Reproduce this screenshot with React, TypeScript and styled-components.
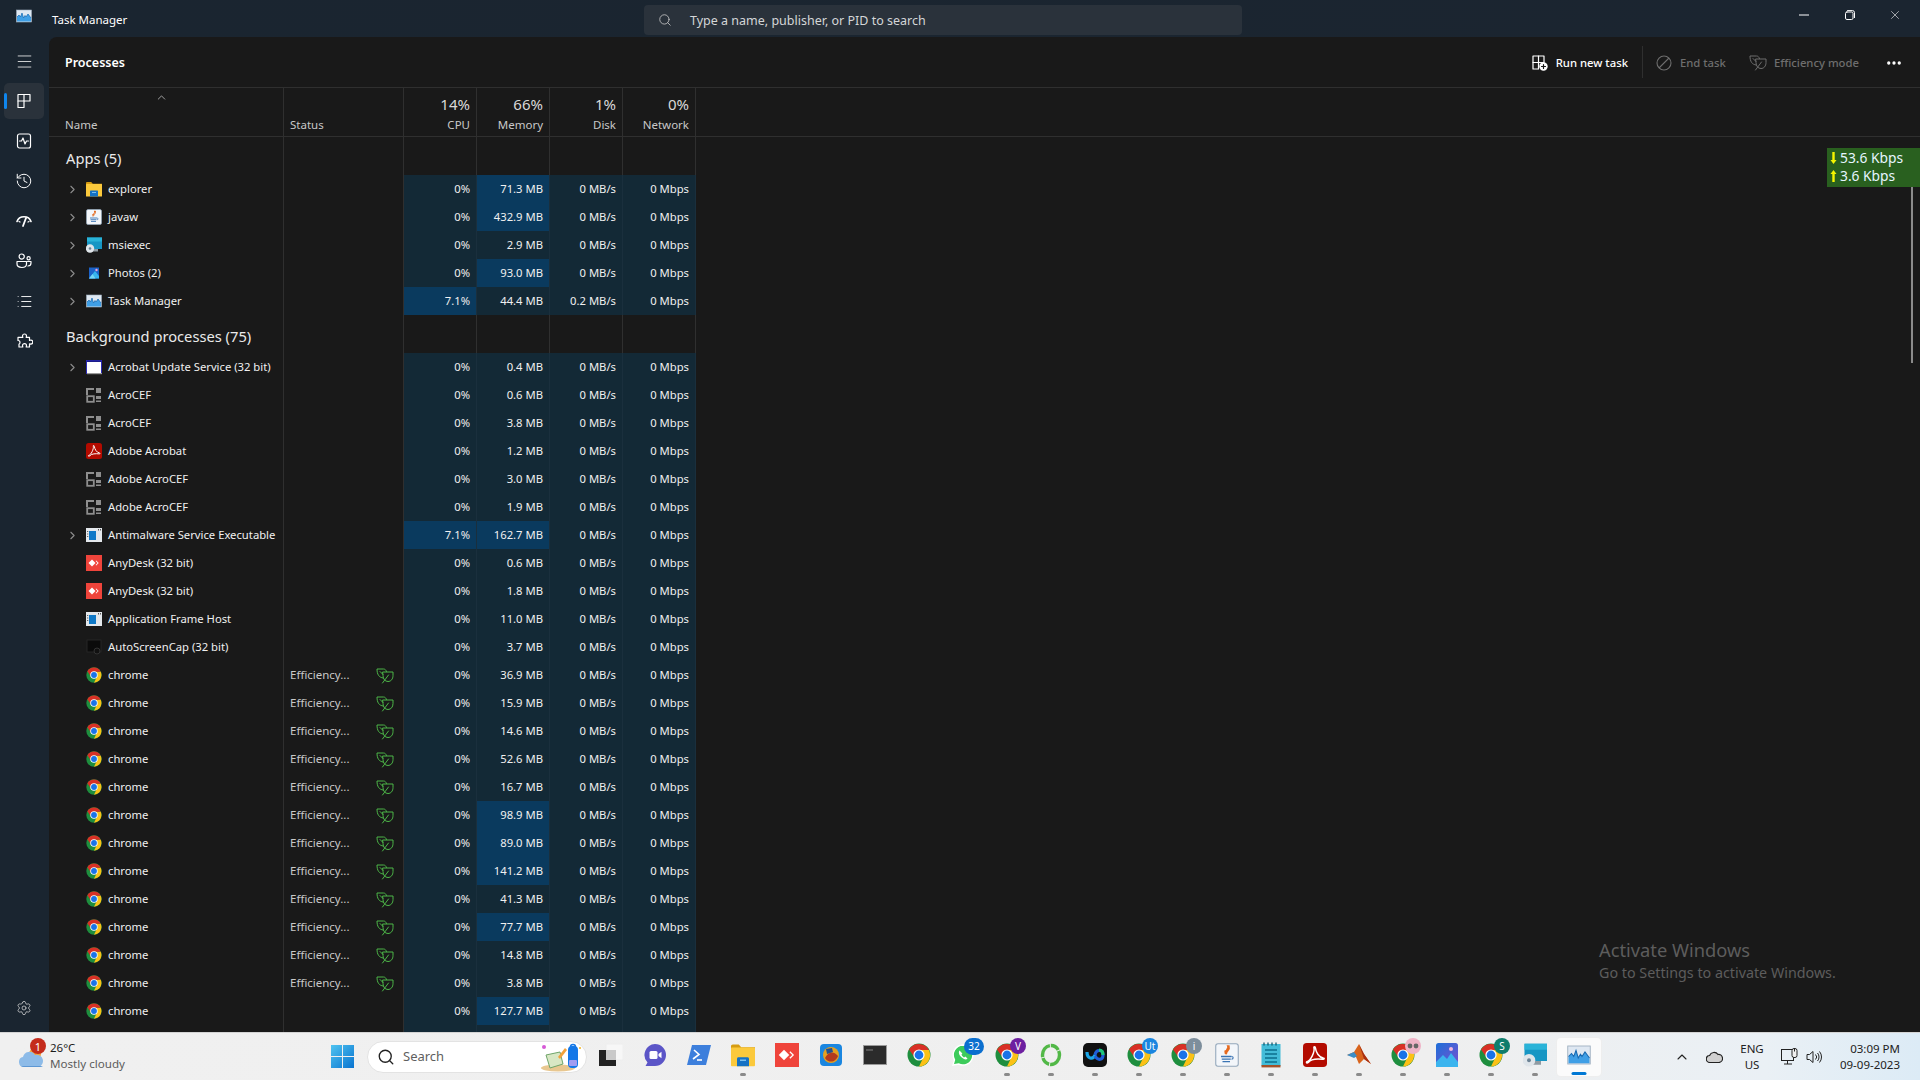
import React from "react";
import styled, { createGlobalStyle } from "styled-components";
import { ChevronRight, ChevronUp, History, List, Menu, MoreHorizontal, Search, Settings, X } from "lucide-react";

const GlobalStyle = createGlobalStyle`
  html, body {
    margin: 0;
    padding: 0;
    width: 1920px;
    height: 1080px;
    overflow: hidden;
    background: #1b2530;
    font-family: "Noto Sans", "Open Sans", sans-serif;
  }
  * { box-sizing: border-box; }
`;

const Screen = styled.div`
  position: relative;
  width: 1920px;
  height: 1080px;
  display: flex;
  flex-direction: column;
  overflow: hidden;
`;

const Window = styled.div`
  flex: 1;
  min-height: 0;
  display: flex;
  flex-direction: column;
  background: linear-gradient(90deg, #1a2530 0%, #1b2530 100%);
  color: #fff;
`;

const TitleBar = styled.div`
  height: 37px;
  flex: none;
  display: grid;
  grid-template-columns: 644px 598px 1fr;
  align-items: center;
`;

const TitleLeft = styled.div`
  display: flex;
  align-items: center;
  padding: 2px 0 0 16px;
  gap: 20px;
  font-size: 11.5px;
  svg { margin-top: -8px; }
`;

const TitleSearch = styled.div`
  height: 30px;
  margin-top: 3px;
  background: #2a323b;
  border-radius: 4px;
  display: flex;
  align-items: center;
  padding-left: 14px;
  gap: 18px;
  font-size: 12.5px;
  color: #d4d6d8;
`;

const WindowButtons = styled.div`
  display: flex;
  justify-content: flex-end;
  padding-right: 2px;
  margin-top: -8px;
`;

const WindowButton = styled.div`
  width: 45.5px;
  height: 28px;
  display: flex;
  align-items: center;
  justify-content: center;
`;

const Body = styled.div`
  flex: 1;
  min-height: 0;
  display: flex;
`;

const Sidebar = styled.nav`
  width: 49px;
  flex: none;
  display: flex;
  flex-direction: column;
  align-items: flex-start;
  padding: 6px 0 3px 4px;
`;

const NavItem = styled.div<{ $active?: boolean }>`
  position: relative;
  width: 40px;
  height: 36px;
  margin-bottom: 4px;
  border-radius: 5px;
  display: flex;
  align-items: center;
  justify-content: center;
  background: ${(p) => (p.$active ? "#2a323b" : "transparent")};
  &::before {
    content: "";
    display: ${(p) => (p.$active ? "block" : "none")};
    position: absolute;
    left: 0;
    top: 10px;
    width: 3px;
    height: 16px;
    border-radius: 2px;
    background: #0f86ee;
  }
`;

const NavSpacer = styled.div`
  flex: 1;
`;

const NavBottom = styled(NavItem)`
  margin-bottom: 3px;
`;

const Panel = styled.main`
  flex: 1;
  min-width: 0;
  background: #191919;
  border-top-left-radius: 8px;
  display: flex;
  flex-direction: column;
  overflow: hidden;
`;

const CommandBar = styled.div`
  height: 51px;
  flex: none;
  display: flex;
  align-items: center;
  padding: 1px 17px 0 16px;
  border-bottom: 1px solid #2f2f2f;
`;

const Heading = styled.h1`
  margin: 0 auto 0 0;
  font-size: 12.5px;
  font-weight: 600;
`;

const Command = styled.div<{ $off?: boolean; $gap?: number; $left?: number }>`
  display: flex;
  align-items: center;
  gap: ${(p) => p.$gap ?? 8}px;
  margin-left: ${(p) => p.$left ?? 0}px;
  font-size: 11.3px;
  font-weight: 500;
  color: ${(p) => (p.$off ? "#6e6e6e" : "#fff")};
`;

const CommandDivider = styled.div`
  width: 1px;
  height: 32px;
  margin: -1px 13px 0 14px;
  background: #2f2f2f;
`;

const HeaderRow = styled.div`
  height: 49px;
  flex: none;
  display: grid;
  grid-template-columns: 235px 120px 73px 73px 73px 73px;
  border-bottom: 1px solid #2f2f2f;
`;

const HeaderCell = styled.div`
  position: relative;
  border-right: 1px solid #2f2f2f;
  display: flex;
  flex-direction: column;
  justify-content: flex-end;
  font-size: 11.5px;
  color: #c8c8c8;
  padding: 0 0 4px 16px;
`;

const StatusHeader = styled(HeaderCell)`
  padding-left: 6px;
`;

const SortMark = styled.div`
  position: absolute;
  left: 106px;
  top: 3px;
  color: #bdbdbd;
  line-height: 0;
`;

const MetricHeader = styled(HeaderCell)`
  align-items: flex-end;
  padding: 0 6px 4px 0;
`;

const Percent = styled.div`
  font-size: 15px;
  line-height: 20px;
  color: #d8d8d8;
  margin-bottom: 3px;
`;

const Rows = styled.div`
  flex: 1;
  min-height: 0;
  overflow: hidden;
`;

const Line = styled.div<{ $h: number }>`
  height: ${(p) => p.$h}px;
  display: grid;
  grid-template-columns: 235px 120px 73px 73px 73px 73px;
`;

const Cell = styled.div`
  border-right: 1px solid #2f2f2f;
  min-width: 0;
`;

const GroupName = styled(Cell)`
  font-size: 14.7px;
  color: #eaeaea;
  padding: 3px 0 0 17px;
  display: flex;
  align-items: center;
  white-space: nowrap;
`;

const NameCell = styled(Cell)`
  display: flex;
  align-items: center;
  font-size: 11.25px;
  color: #f0f0f0;
  white-space: nowrap;
`;

const NameText = styled.span`
  margin-top: -2px;
`;

const Expander = styled.div`
  width: 37px;
  padding-left: 17px;
  color: #8c8c8c;
  display: flex;
  flex: none;
`;

const RowIcon = styled.div`
  width: 16px;
  height: 16px;
  flex: none;
  margin-right: 6px;
  display: flex;
`;

const StatusCell = styled(Cell)`
  display: flex;
  align-items: center;
  justify-content: space-between;
  padding: 0 9px 0 6px;
  font-size: 11.5px;
  color: #c8c8c8;
  span { margin-top: -2px; }
`;

const HeatCell = styled.div<{ $hot?: boolean }>`
  background: ${(p) => (p.$hot ? "#0a3a5e" : "#132936")};
  border-right: 1px solid #1a2f3d;
  display: flex;
  align-items: center;
  justify-content: flex-end;
  padding: 0 6px 2px 0;
  font-size: 11.25px;
  color: #f0f0f0;
  white-space: nowrap;
`;

const NetMeter = styled.div`
  position: absolute;
  left: 1827px;
  top: 148px;
  width: 93px;
  height: 39px;
  background: #29601f;
  color: #e6f6ff;
  font-size: 13.8px;
  line-height: 18px;
  padding: 1px 0 0 3px;
`;

const NetLine = styled.div`
  display: flex;
  align-items: center;
  gap: 3px;
  white-space: nowrap;
`;

const ArrowSvg = styled.svg<{ $up?: boolean }>`
  transform: ${(p) => (p.$up ? "none" : "rotate(180deg)")};
`;

const ScrollThumb = styled.div`
  position: absolute;
  left: 1911px;
  top: 187px;
  width: 2px;
  height: 176px;
  background: #8b8b8b;
`;

const Watermark = styled.div`
  position: absolute;
  left: 1599px;
  top: 936px;
  color: #5d5d5d;
  font-size: 18.3px;
  line-height: 28px;
  small {
    display: block;
    font-size: 14.3px;
    line-height: 18px;
  }
`;

const Taskbar = styled.footer`
  height: 48px;
  flex: none;
  display: flex;
  align-items: center;
  background: linear-gradient(90deg, #f0f0f0 0%, #efefef 75%, #eaf0f5 92%, #dcebf6 100%);
  border-top: 1px solid #d4d4d4;
  color: #1b1b1b;
`;

const Weather = styled.div`
  position: relative;
  width: 320px;
  flex: none;
  height: 100%;
  display: flex;
  align-items: center;
  padding-left: 18px;
  gap: 6px;
`;

const WeatherBadge = styled.div`
  position: absolute;
  left: 30px;
  top: 5px;
  width: 16px;
  height: 16px;
  border-radius: 50%;
  background: #c42b1c;
  color: #fff;
  font-size: 11px;
  display: flex;
  align-items: center;
  justify-content: center;
`;

const WeatherText = styled.div`
  font-size: 11.5px;
  line-height: 16px;
  margin-top: -2px;
  small {
    display: block;
    font-size: 11.6px;
    color: #5c5c5c;
  }
`;

const StartButton = styled.div`
  width: 47px;
  flex: none;
  display: flex;
  justify-content: center;
  padding-right: 2px;
`;

const SearchPill = styled.div`
  width: 220px;
  height: 32px;
  margin-right: 2px;
  flex: none;
  border-radius: 16px;
  background: #fff;
  border: 1px solid #e3e3e3;
  display: flex;
  align-items: center;
  padding-left: 9px;
  gap: 8px;
  font-size: 13px;
  color: #5f5f5f;
  span { margin-top: -2px; }
  svg:last-child { margin-left: auto; margin-right: 4px; }
`;

const AppItem = styled.div<{ $active?: boolean }>`
  position: relative;
  width: 44px;
  height: 38px;
  flex: none;
  display: flex;
  align-items: center;
  justify-content: center;
  ${(p) => p.$active && "background: #fbfbfb; border-radius: 4px; box-shadow: 0 0 0 1px #eeeeee;"}
  padding-bottom: 3px;
`;

const RunDot = styled.div<{ $active?: boolean }>`
  position: absolute;
  left: 50%;
  bottom: ${(p) => (p.$active ? "1px" : "0")};
  transform: translateX(-50%);
  width: ${(p) => (p.$active ? "15px" : "6px")};
  height: 3px;
  border-radius: 2px;
  background: ${(p) => (p.$active ? "#0078d4" : "#8a8a8a")};
`;

const AppBadge = styled.div<{ $bg: string; $wide?: boolean }>`
  position: absolute;
  right: ${(p) => (p.$wide ? "1px" : "3px")};
  top: 0;
  min-width: ${(p) => (p.$wide ? "20px" : "16px")};
  height: ${(p) => (p.$wide ? "17px" : "16px")};
  padding: 0 2px;
  border-radius: 9px;
  background: ${(p) => p.$bg};
  color: #fff;
  font-size: 10px;
  display: flex;
  align-items: center;
  justify-content: center;
`;

const PinkGlasses = styled.div`
  position: absolute;
  right: 4px;
  top: 0;
  width: 16px;
  height: 16px;
  border-radius: 50%;
  background: #efb3c6;
  display: flex;
  align-items: center;
  justify-content: center;
`;

const Tray = styled.div`
  margin-left: auto;
  display: flex;
  align-items: center;
  padding-right: 20px;
`;

const TrayBox = styled.div<{ $w: number }>`
  width: ${(p) => p.$w}px;
  display: flex;
  align-items: center;
  justify-content: center;
`;

const Lang = styled(TrayBox)`
  flex-direction: column;
  font-size: 11.5px;
  line-height: 16px;
  color: #222;
`;

const Clock = styled.div`
  width: 76px;
  text-align: right;
  font-size: 11.5px;
  line-height: 16px;
  color: #222;
`;

const stroke = { fill: "none", stroke: "#fff", strokeWidth: 1.2, strokeLinecap: "round" as const, strokeLinejoin: "round" as const };

const TaskManagerIcon = ({ size = 16 }: { size?: number }) => (
  <svg width={size} height={size} viewBox="0 0 16 16">
    <rect x="0.5" y="2" width="15" height="12" fill="#dfe8f2" stroke="#9fb0c0" strokeWidth="0.6" />
    <path d="M1 12V9l2-2 1.5 2L6 5l1.5 5L9 7.5 10 9l2-3 3 4v3.5H1z" fill="#3f9fe6" />
    <path d="M1 9l2-2 1.5 2L6 5l1.5 5L9 7.5 10 9l2-3 3 4" fill="none" stroke="#1668b0" strokeWidth="0.7" />
  </svg>
);

const FolderIcon = ({ size = 16 }: { size?: number }) => (
  <svg width={size} height={size} viewBox="0 0 16 16">
    <path d="M0 2.2C0 1.5.5 1 1.2 1h4l1.6 1.8H16V4H0z" fill="#d69c12" />
    <rect x="0" y="3" width="16" height="12.5" rx="0.6" fill="#fbc93c" />
    <path d="M4 10.5c0-.6.4-1 1-1h6c.6 0 1 .4 1 1v5H4z" fill="#1572c4" />
    <rect x="6" y="11" width="4" height="1" fill="#7cc0ee" />
  </svg>
);

const JavaIcon = ({ size = 16 }: { size?: number }) => (
  <svg width={size} height={size} viewBox="0 0 16 16">
    <rect x="0.5" y="0.5" width="15" height="15" rx="1.5" fill="#f3f6fa" stroke="#93a7bb" strokeWidth="0.7" />
    <path d="M8.5 2c1 2-2 2.5-.8 4.5.3-1.5 2.5-2 1.6-4.5zM7 5c-.8 1 .2 1.6 0 2.5" fill="none" stroke="#e5691e" strokeWidth="1" />
    <path d="M4 9h7M4.5 10.7h6M5 12.4h5" stroke="#3a74b4" strokeWidth="0.9" />
    <path d="M11 9c1.5 0 1.5 1.8 0 1.8" fill="none" stroke="#3a74b4" strokeWidth="0.7" />
  </svg>
);

const MsiIcon = ({ size = 16 }: { size?: number }) => (
  <svg width={size} height={size} viewBox="0 0 16 16">
    <rect x="1" y="0.5" width="15" height="11.5" fill="#1796c4" />
    <rect x="1" y="0.5" width="15" height="4" fill="#29b3d8" />
    <rect x="5" y="12" width="7" height="2.5" fill="#8f9aa2" />
    <circle cx="4" cy="11.5" r="4.2" fill="#dfe5ea" />
    <circle cx="4" cy="11.5" r="1.3" fill="#6d8496" />
  </svg>
);

const PhotosIcon = ({ size = 16 }: { size?: number }) => (
  <svg width={size} height={size} viewBox="0 0 16 16">
    <rect x="3" y="2.5" width="10" height="11" fill="#1c62c8" />
    <path d="M3 13.5l6-7.5 4 5v2.5z" fill="#37b4ee" />
    <path d="M3 13.5L6.5 9l3 4.5z" fill="#76d6f5" />
    <circle cx="10.5" cy="5" r="1.2" fill="#f0a6d8" />
  </svg>
);

const PlainWindowIcon = ({ size = 16 }: { size?: number }) => (
  <svg width={size} height={size} viewBox="0 0 16 16">
    <rect x="0.5" y="1.5" width="15" height="13" fill="#fff" stroke="#2b2bb8" />
    <rect x="0.5" y="1.5" width="15" height="1.5" fill="#1c1c8c" />
    <rect x="1" y="14" width="15" height="1.2" fill="#9a9a9a" />
  </svg>
);

const GenericAppIcon = ({ size = 16 }: { size?: number }) => (
  <svg width={size} height={size} viewBox="0 0 16 16">
    <path d="M1 8V2h7" fill="none" stroke="#8e8e8e" strokeWidth="2" />
    <rect x="10" y="1" width="5" height="5" fill="#8e8e8e" />
    <rect x="1.2" y="9.2" width="6.6" height="5.6" fill="none" stroke="#8e8e8e" strokeWidth="1.8" />
    <rect x="10" y="9" width="5" height="3" fill="#8e8e8e" />
    <rect x="10" y="13.5" width="5" height="1.5" fill="#8e8e8e" />
  </svg>
);

const AcrobatIcon = ({ size = 16 }: { size?: number }) => (
  <svg width={size} height={size} viewBox="0 0 16 16">
    <rect width="16" height="16" rx="2.5" fill="#b30b00" />
    <path d="M2.5 12.5C5 12 8 6 7.3 3.2c-.3-1 .9-1 1 .1C8.6 6 10.5 9.5 13.5 10c1 .1.7 1-.3.9C10 10.5 5.5 10.5 3.5 13c-.8.7-1.6 0-1-.5z" fill="none" stroke="#fff" strokeWidth="1" />
  </svg>
);

const AppFrameIcon = ({ size = 16 }: { size?: number }) => (
  <svg width={size} height={size} viewBox="0 0 16 16">
    <rect y="1" width="16" height="14" fill="#e4e8ec" />
    <rect x="3" y="4" width="7" height="9" fill="#0f79c8" />
    <rect x="1.2" y="4" width="1" height="1" fill="#444" />
    <rect x="1.2" y="6.5" width="1" height="1" fill="#444" />
    <rect x="1.2" y="9" width="1" height="1" fill="#444" />
    <rect x="12" y="2" width="1" height="1.5" fill="#555" />
    <rect x="14" y="2" width="1" height="1.5" fill="#555" />
  </svg>
);

const AnyDeskIcon = ({ size = 16 }: { size?: number }) => (
  <svg width={size} height={size} viewBox="0 0 16 16">
    <rect width="16" height="16" fill="#ef443b" />
    <path d="M6 4.5L9.5 8 6 11.5 2.5 8z" fill="#fff" />
    <path d="M10.2 5.5L12.7 8l-2.5 2.5-.6-.6L11.500 8 9.600 6.100z" fill="#fff" />
  </svg>
);

const ScreenCapIcon = ({ size = 16 }: { size?: number }) => (
  <svg width={size} height={size} viewBox="0 0 16 16">
    <rect x="1" y="1" width="14" height="12" fill="#0b0b0b" stroke="#262626" />
    <circle cx="11" cy="12" r="3" fill="#111" stroke="#333" />
  </svg>
);

const ChromeIcon = ({ size = 16 }: { size?: number }) => (
  <svg width={size} height={size} viewBox="0 0 24 24">
    <circle cx="12" cy="12" r="11.5" fill="#1e8e3e" />
    <path d="M12 7h10A11.5 11.5 0 0 1 12 23.5l4.33-9A5 5 0 0 0 12 7z" fill="#fbc116" />
    <path d="M2 6.5A11.5 11.5 0 0 1 22 7H12a5 5 0 0 0-4.33 7.5z" fill="#d93025" />
    <circle cx="12" cy="12" r="5.6" fill="#fff" />
    <circle cx="12" cy="12" r="4.4" fill="#1a73e8" />
  </svg>
);

const LeafIcon = ({ color = "#4db748" }: { color?: string }) => (
  <svg width="18" height="17" viewBox="0 0 18 17" fill="none" stroke={color} strokeWidth="1" strokeLinejoin="round" strokeLinecap="round">
    <path d="M7 11C3 10.5 1 7.5 1 2h6.5c1.5 0 2.5 1 3 2.5" />
    <path d="M7 5h10v3.5c0 3.5-2 6-5 6s-5-2.500-5-5.500z" />
    <path d="M4 4.5l3 3M12.5 8l-6 8" />
  </svg>
);

const ProcessesNavIcon = () => (
  <svg width="16" height="16" viewBox="0 0 16 16" {...stroke}>
    <path d="M2 1.5h12V8H8v6.5H2z" />
    <path d="M2 8h6V1.5" />
  </svg>
);

const PerformanceNavIcon = () => (
  <svg width="16" height="16" viewBox="0 0 16 16" {...stroke}>
    <rect x="1.5" y="1" width="13" height="14" rx="2" />
    <path d="M3.5 8h2L7 5l2 6 1.5-3h2" />
  </svg>
);

const StartupNavIcon = () => (
  <svg width="16" height="16" viewBox="0 0 16 16" {...stroke}>
    <path d="M1 8.5C2 5.5 4.8 3.7 8 3.7s6 1.8 7 4.8" strokeWidth="1.6" />
    <path d="M10 5L7 13" strokeWidth="1.8" />
    <path d="M3 8.5l1 .5M13 8.5l-1 .5" />
  </svg>
);

const UsersNavIcon = () => (
  <svg width="16" height="16" viewBox="0 0 16 16" {...stroke}>
    <circle cx="5.7" cy="3.6" r="2.6" />
    <circle cx="12.6" cy="5.2" r="1.6" />
    <path d="M1 8.5h9.5V11c0 2.2-2 3.5-4.7 3.5S1 13.2 1 11z" />
    <path d="M11.5 8.5H15V10c0 2-1.3 3-3 3" />
  </svg>
);

const ServicesNavIcon = () => (
  <svg width="17" height="17" viewBox="0 0 17 17" {...stroke}>
    <path d="M6.5 3a2 2 0 0 1 4 0c0 .6-.3 1-.3 1.4h3.300v3c.4 0 .8-.3 1.300-.3a2 2 0 0 1 0 4c-.5 0-.9-.3-1.300-.3V14h-3.300c0-.4.3-.8.3-1.400a2 2 0 0 0-4 0c0 .6.3 1 .3 1.400H3v-3c.6 0 1-.7 1-1.500S3.400 7.500 2 7.500V4.400h4.800c0-.4-.3-.8-.3-1.400z" />
  </svg>
);

const RunTaskIcon = () => (
  <svg width="16" height="16" viewBox="0 0 16 16" {...stroke}>
    <path d="M1 1h11v6.500H6.500V14H1z" />
    <path d="M1 7.5h5.500V1" />
    <circle cx="11.5" cy="11.5" r="4.2" fill="#fff" stroke="none" />
    <path d="M11.5 9.5v4M9.5 11.5h4" stroke="#191919" />
  </svg>
);

const EndTaskIcon = () => (
  <svg width="16" height="16" viewBox="0 0 16 16" fill="none" stroke="#6e6e6e" strokeWidth="1.1">
    <circle cx="8" cy="8" r="7" />
    <path d="M3 13L13 3" />
  </svg>
);

const WindowRestore = () => (
  <svg width="10" height="10" viewBox="0 0 10 10" {...stroke} strokeWidth="1">
    <rect x="0.5" y="2" width="7.5" height="7.5" rx="1.4" />
    <path d="M2.5.6h5a2 2 0 0 1 2 2v5" />
  </svg>
);

const WeatherCloud = () => (
  <svg width="26" height="22" viewBox="0 0 26 22">
    <circle cx="17" cy="8" r="6" fill="#f3a33a" />
    <path d="M6 21a5 5 0 0 1-1-9.900A6.500 6.500 0 0 1 17 9a5.500 5.500 0 0 1 3.500 12z" fill="#8dbbe8" />
    <path d="M6 21a5 5 0 0 1-3-1h22a5 5 0 0 1-4 1z" fill="#5d97d3" />
  </svg>
);

const WindowsLogo = () => (
  <svg width="23" height="23" viewBox="0 0 23 23">
    <defs>
      <linearGradient id="winGrad" x1="0" y1="0" x2="1" y2="1">
        <stop offset="0" stopColor="#4fc3f0" />
        <stop offset="1" stopColor="#0a74d0" />
      </linearGradient>
    </defs>
    <path d="M0 0h11v11H0zM12 0h11v11H12zM0 12h11v11H0zM12 12h11v11H12z" fill="url(#winGrad)" />
  </svg>
);

const SearchArt = () => (
  <svg width="44" height="30" viewBox="0 0 44 30">
    <ellipse cx="20" cy="26" rx="17" ry="3.5" fill="#e8c790" />
    <path d="M8 13l14-3 3 12-13 4z" fill="#d8e7c4" stroke="#6fa56a" />
    <path d="M20 15l7-9 2 2-7 9z" fill="#f2a23c" />
    <rect x="30" y="4" width="10" height="22" rx="4" fill="#1478e8" />
    <circle cx="35" cy="5" r="2.5" fill="none" stroke="#1478e8" strokeWidth="1.5" />
    <rect x="31" y="18" width="8" height="6" rx="1" fill="#a19cf0" />
    <circle cx="6" cy="5" r="2" fill="#d65ad6" />
    <circle cx="42" cy="6" r="1" fill="#f2b322" />
  </svg>
);

const TaskViewIcon = () => (
  <svg width="24" height="24" viewBox="0 0 24 24">
    <rect x="7" y="1" width="17" height="16" fill="#f7f7f7" stroke="#eeeeee" />
    <rect x="0" y="7" width="17" height="16" fill="#222" />
    <rect x="7" y="7" width="10" height="10" fill="#c9c9c9" />
  </svg>
);

const MeetIcon = () => (
  <svg width="24" height="24" viewBox="0 0 24 24">
    <path d="M12 1a11 11 0 0 1 0 22H2.500l2-3.500A11 11 0 0 1 12 1z" fill="#5b55c7" />
    <rect x="6.5" y="8" width="8" height="8" rx="1.5" fill="#fff" />
    <path d="M15.5 11l3-2.200v6.400l-3-2.200z" fill="#fff" />
  </svg>
);

const TerminalIcon = () => (
  <svg width="24" height="24" viewBox="0 0 24 24">
    <path d="M5 2h19l-5 20H0z" fill="#3d7fdc" />
    <path d="M7 7l5 4.5L6 16" fill="none" stroke="#fff" strokeWidth="1.6" />
    <path d="M10 17h5" stroke="#fff" strokeWidth="1.6" />
  </svg>
);

const GameIcon = () => (
  <svg width="22" height="22" viewBox="0 0 22 22">
    <rect width="22" height="22" rx="4" fill="#1a86e0" />
    <circle cx="11" cy="11" r="8" fill="#e5a020" />
    <path d="M5 14c3-6 8-8 13-2-2 6-9 8-13 2z" fill="#b33a1e" />
    <path d="M6 5l6-1 1 4-6 2z" fill="#20508f" />
  </svg>
);

const ConsoleIcon = () => (
  <svg width="24" height="20" viewBox="0 0 24 20">
    <rect x="0.5" y="0.5" width="23" height="19" fill="#2b2b2b" stroke="#9a9a9a" />
    <rect x="3" y="4" width="7" height="2" fill="#555" />
  </svg>
);

const WhatsappIcon = () => (
  <svg width="22" height="22" viewBox="0 0 22 22">
    <path d="M11 1a10 10 0 1 1-4.500 19L1 21l1.500-5.200A10 10 0 0 1 11 1z" fill="#3dcb5b" stroke="#fff" strokeWidth="1.4" />
    <path d="M7.5 6.500c-1.500 2 0 5 2 6.800s4.500 3 6 1.300l-2.200-2-1.200.8c-1-.3-2.200-1.600-2.600-2.800l.9-1.200z" fill="#fff" />
  </svg>
);

const RingIcon = () => (
  <svg width="22" height="24" viewBox="0 0 22 24">
    <ellipse cx="11" cy="12" rx="8.5" ry="9.5" fill="none" stroke="#52b847" strokeWidth="3.4" strokeDasharray="15 1 9 1" />
  </svg>
);

const WebexIcon = () => (
  <svg width="24" height="24" viewBox="0 0 24 24">
    <rect width="24" height="24" rx="5" fill="#111" />
    <path d="M4 9c0 7 6 8 8 3" fill="none" stroke="#1ba6e8" strokeWidth="3.2" />
    <path d="M12 12c1-6 8-6 8 0 0 5-5 6-8 1" fill="none" stroke="#1f5ed8" strokeWidth="3.2" />
    <path d="M16 7c2 0 4 1 4 5" fill="none" stroke="#1fc77a" strokeWidth="3.2" />
  </svg>
);

const NotepadIcon = () => (
  <svg width="20" height="26" viewBox="0 0 20 26">
    <rect x="0.5" y="2" width="19" height="22" fill="#43bcd8" />
    <rect x="0.5" y="23" width="19" height="2.4" fill="#a4522a" />
    <path d="M4 8h12M4 12h12M4 16h12M4 20h12" stroke="#0d6f8d" strokeWidth="1.6" />
    <path d="M3 .5v3M7 .5v3M11 .5v3M15 .5v3" stroke="#155a70" strokeWidth="1.3" />
  </svg>
);

const MatlabIcon = () => (
  <svg width="26" height="24" viewBox="0 0 26 24">
    <path d="M1 12l7-3 5-8 5 10 7 10-7-5-5 5-3-7z" fill="#d9641c" />
    <path d="M1 12l7-3 3 4-3 2z" fill="#3b8dc6" />
    <path d="M13 1l5 10 7 10-7-5z" fill="#a82f12" />
  </svg>
);

const GalleryIcon = () => (
  <svg width="22" height="24" viewBox="0 0 22 24">
    <defs>
      <linearGradient id="galleryGrad" x1="0" y1="0" x2="1" y2="1">
        <stop offset="0" stopColor="#1d6fd8" />
        <stop offset="1" stopColor="#7b4fd0" />
      </linearGradient>
    </defs>
    <rect width="22" height="24" rx="2.5" fill="url(#galleryGrad)" />
    <path d="M0 19l7-7 4 4 4-6 7 9v5H0z" fill="#3bb4ee" />
    <circle cx="15" cy="6" r="2" fill="#f1b5dc" />
  </svg>
);

const GlassesIcon = () => (
  <svg width="12" height="6" viewBox="0 0 12 6">
    <circle cx="3" cy="3" r="2.4" fill="#666" />
    <circle cx="9" cy="3" r="2.4" fill="#666" />
  </svg>
);

const CloudTray = () => (
  <svg width="17" height="12" viewBox="0 0 17 12">
    <path d="M4 11.5a3.500 3.500 0 0 1-.4-7A4.800 4.800 0 0 1 12 3.500a3.900 3.900 0 0 1 1 8z" fill="#d0d0d0" stroke="#222" strokeWidth="1.2" />
  </svg>
);

const NetworkTray = () => (
  <svg width="17" height="18" viewBox="0 0 17 18" fill="none" stroke="#222" strokeWidth="1">
    <rect x="0.5" y="1.5" width="12" height="11" />
    <path d="M3 16h8M6.5 12.5V16" />
    <rect x="11" y="0.5" width="5" height="9" rx="2" fill="#f0f0f0" />
    <path d="M13.5.5v3" />
  </svg>
);

const SpeakerTray = () => (
  <svg width="17" height="16" viewBox="0 0 17 16" fill="none" stroke="#222" strokeWidth="1">
    <path d="M1 5.5h2.500L7 2.500v11l-3.500-3H1z" />
    <path d="M9.5 5.5a3.500 3.500 0 0 1 0 5M11.5 4a6 6 0 0 1 0 8M13.5 2.5a8.500 8.500 0 0 1 0 11" />
  </svg>
);

const ArrowGlyph = ({ up }: { up?: boolean }) => (
  <ArrowSvg $up={up} width="7" height="14" viewBox="0 0 7 14">
    <path d="M3.5 1l3 4H4.700v8H2.300V5H.5z" fill="#f5f500" />
  </ArrowSvg>
);

type Proc = { name: string; icon: React.ReactNode; expand?: boolean; eco?: boolean; cpu: string; mem: string; disk?: string };

const generic = <GenericAppIcon />;
const chrome = <ChromeIcon />;

const apps: Proc[] = [
  { name: "explorer", icon: <FolderIcon />, expand: true, cpu: "0%", mem: "71.3 MB" },
  { name: "javaw", icon: <JavaIcon />, expand: true, cpu: "0%", mem: "432.9 MB" },
  { name: "msiexec", icon: <MsiIcon />, expand: true, cpu: "0%", mem: "2.9 MB" },
  { name: "Photos (2)", icon: <PhotosIcon />, expand: true, cpu: "0%", mem: "93.0 MB" },
  { name: "Task Manager", icon: <TaskManagerIcon />, expand: true, cpu: "7.1%", mem: "44.4 MB", disk: "0.2 MB/s" },
];

const chromeMem = ["36.9", "15.9", "14.6", "52.6", "16.7", "98.9", "89.0", "141.2", "41.3", "77.7", "14.8", "3.8"];

const background: Proc[] = [
  { name: "Acrobat Update Service (32 bit)", icon: <PlainWindowIcon />, expand: true, cpu: "0%", mem: "0.4 MB" },
  { name: "AcroCEF", icon: generic, cpu: "0%", mem: "0.6 MB" },
  { name: "AcroCEF", icon: generic, cpu: "0%", mem: "3.8 MB" },
  { name: "Adobe Acrobat", icon: <AcrobatIcon />, cpu: "0%", mem: "1.2 MB" },
  { name: "Adobe AcroCEF", icon: generic, cpu: "0%", mem: "3.0 MB" },
  { name: "Adobe AcroCEF", icon: generic, cpu: "0%", mem: "1.9 MB" },
  { name: "Antimalware Service Executable", icon: <AppFrameIcon />, expand: true, cpu: "7.1%", mem: "162.7 MB" },
  { name: "AnyDesk (32 bit)", icon: <AnyDeskIcon />, cpu: "0%", mem: "0.6 MB" },
  { name: "AnyDesk (32 bit)", icon: <AnyDeskIcon />, cpu: "0%", mem: "1.8 MB" },
  { name: "Application Frame Host", icon: <AppFrameIcon />, cpu: "0%", mem: "11.0 MB" },
  { name: "AutoScreenCap (32 bit)", icon: <ScreenCapIcon />, cpu: "0%", mem: "3.7 MB" },
  ...chromeMem.map((m) => ({ name: "chrome", icon: chrome, eco: true, cpu: "0%", mem: `${m} MB` })),
  { name: "chrome", icon: chrome, cpu: "0%", mem: "127.7 MB" },
];

const ProcRow = ({ p }: { p: Proc }) => (
  <Line $h={28}>
    <NameCell>
      <Expander>{p.expand && <ChevronRight size={13} strokeWidth={2} />}</Expander>
      <RowIcon>{p.icon}</RowIcon>
      <NameText>{p.name}</NameText>
    </NameCell>
    <StatusCell>
      {p.eco && (
        <>
          <span>Efficiency...</span>
          <LeafIcon />
        </>
      )}
    </StatusCell>
    <HeatCell $hot={parseFloat(p.cpu) > 5}>{p.cpu}</HeatCell>
    <HeatCell $hot={parseFloat(p.mem) >= 70}>{p.mem}</HeatCell>
    <HeatCell>{p.disk ?? "0 MB/s"}</HeatCell>
    <HeatCell>0 Mbps</HeatCell>
  </Line>
);

const GroupRow = ({ label }: { label: string }) => (
  <Line $h={38}>
    <GroupName>{label}</GroupName>
    <Cell />
    <Cell />
    <Cell />
    <Cell />
    <Cell />
  </Line>
);

type TaskApp = { icon: React.ReactNode; running?: boolean; badge?: React.ReactNode; active?: boolean };

const taskApps: TaskApp[] = [
  { icon: <TaskViewIcon /> },
  { icon: <MeetIcon /> },
  { icon: <TerminalIcon /> },
  { icon: <FolderIcon size={24} />, running: true },
  { icon: <AnyDeskIcon size={24} /> },
  { icon: <GameIcon /> },
  { icon: <ConsoleIcon /> },
  { icon: <ChromeIcon size={24} /> },
  { icon: <WhatsappIcon />, badge: <AppBadge $bg="#0b6fcf" $wide>32</AppBadge> },
  { icon: <ChromeIcon size={24} />, running: true, badge: <AppBadge $bg="#6d1fa0">V</AppBadge> },
  { icon: <RingIcon />, running: true },
  { icon: <WebexIcon />, running: true },
  { icon: <ChromeIcon size={24} />, running: true, badge: <AppBadge $bg="#1a86e0">Ut</AppBadge> },
  { icon: <ChromeIcon size={24} />, running: true, badge: <AppBadge $bg="#7d8e9c">i</AppBadge> },
  { icon: <JavaIcon size={24} />, running: true },
  { icon: <NotepadIcon />, running: true },
  { icon: <AcrobatIcon size={24} />, running: true },
  { icon: <MatlabIcon />, running: true },
  { icon: <ChromeIcon size={24} />, running: true, badge: <PinkGlasses><GlassesIcon /></PinkGlasses> },
  { icon: <GalleryIcon />, running: true },
  { icon: <ChromeIcon size={24} />, running: true, badge: <AppBadge $bg="#0f7d6c">S</AppBadge> },
  { icon: <MsiIcon size={24} />, running: true },
  { icon: <TaskManagerIcon size={24} />, active: true, running: true },
];

export default function App() {
  return (
    <Screen>
      <GlobalStyle />
      <Window>
        <TitleBar>
          <TitleLeft>
            <TaskManagerIcon />
            <span>Task Manager</span>
          </TitleLeft>
          <TitleSearch>
            <Search size={14} strokeWidth={1.4} color="#c8c8c8" />
            Type a name, publisher, or PID to search
          </TitleSearch>
          <WindowButtons>
            <WindowButton>
              <svg width="10" height="2" viewBox="0 0 10 2"><path d="M0 1h10" stroke="#fff" /></svg>
            </WindowButton>
            <WindowButton><WindowRestore /></WindowButton>
            <WindowButton><X size={14} strokeWidth={1} color="#fff" /></WindowButton>
          </WindowButtons>
        </TitleBar>
        <Body>
          <Sidebar>
            <NavItem><Menu size={19} strokeWidth={1.1} color="#e8e8e8" /></NavItem>
            <NavItem $active><ProcessesNavIcon /></NavItem>
            <NavItem><PerformanceNavIcon /></NavItem>
            <NavItem><History size={18} strokeWidth={1.3} color="#fff" /></NavItem>
            <NavItem><StartupNavIcon /></NavItem>
            <NavItem><UsersNavIcon /></NavItem>
            <NavItem><List size={17} strokeWidth={1.3} color="#fff" /></NavItem>
            <NavItem><ServicesNavIcon /></NavItem>
            <NavSpacer />
            <NavBottom><Settings size={16} strokeWidth={1.1} color="#dcdcdc" /></NavBottom>
          </Sidebar>
          <Panel>
            <CommandBar>
              <Heading>Processes</Heading>
              <Command><RunTaskIcon />Run new task</Command>
              <CommandDivider />
              <Command $off $gap={8}><EndTaskIcon />End task</Command>
              <Command $off $gap={7} $left={23}><LeafIcon color="#6e6e6e" />Efficiency mode</Command>
              <Command $left={26}><MoreHorizontal size={18} strokeWidth={2.4} color="#fff" /></Command>
            </CommandBar>
            <HeaderRow>
              <HeaderCell>
                <SortMark><ChevronUp size={13} strokeWidth={1.5} /></SortMark>
                Name
              </HeaderCell>
              <StatusHeader>Status</StatusHeader>
              <MetricHeader><Percent>14%</Percent>CPU</MetricHeader>
              <MetricHeader><Percent>66%</Percent>Memory</MetricHeader>
              <MetricHeader><Percent>1%</Percent>Disk</MetricHeader>
              <MetricHeader><Percent>0%</Percent>Network</MetricHeader>
            </HeaderRow>
            <Rows>
              <GroupRow label="Apps (5)" />
              {apps.map((p) => <ProcRow key={p.name} p={p} />)}
              <GroupRow label="Background processes (75)" />
              {background.map((p, i) => <ProcRow key={i} p={p} />)}
              <Line $h={28}>
                <Cell /><Cell />
                <HeatCell /><HeatCell /><HeatCell /><HeatCell />
              </Line>
            </Rows>
          </Panel>
        </Body>
      </Window>
      <Taskbar>
        <Weather>
          <WeatherCloud />
          <WeatherBadge>1</WeatherBadge>
          <WeatherText>26°C<small>Mostly cloudy</small></WeatherText>
        </Weather>
        <StartButton><WindowsLogo /></StartButton>
        <SearchPill>
          <Search size={18} strokeWidth={1.8} color="#222" />
          <span>Search</span>
          <SearchArt />
        </SearchPill>
        {taskApps.map((a, i) => (
          <AppItem key={i} $active={a.active}>
            {a.icon}
            {a.badge}
            {a.running && <RunDot $active={a.active} />}
          </AppItem>
        ))}
        <Tray>
          <TrayBox $w={32}><ChevronUp size={16} strokeWidth={1.6} color="#222" /></TrayBox>
          <TrayBox $w={32}><CloudTray /></TrayBox>
          <Lang $w={44}><span>ENG</span><span>US</span></Lang>
          <TrayBox $w={30}><NetworkTray /></TrayBox>
          <TrayBox $w={20}><SpeakerTray /></TrayBox>
          <Clock>03:09 PM<br />09-09-2023</Clock>
        </Tray>
      </Taskbar>
      <NetMeter>
        <NetLine><ArrowGlyph />53.6 Kbps</NetLine>
        <NetLine><ArrowGlyph up />3.6 Kbps</NetLine>
      </NetMeter>
      <ScrollThumb />
      <Watermark>
        Activate Windows
        <small>Go to Settings to activate Windows.</small>
      </Watermark>
    </Screen>
  );
}
